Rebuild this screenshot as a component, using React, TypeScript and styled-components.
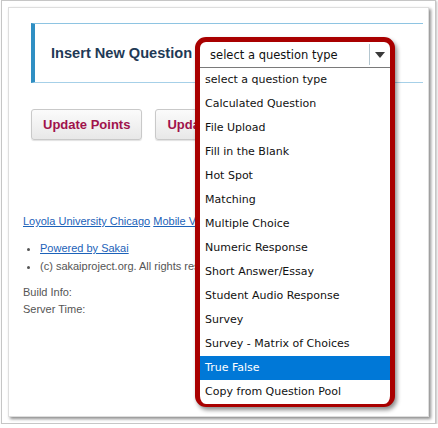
import React from "react";
import styled, { createGlobalStyle } from "styled-components";

const GlobalStyle = createGlobalStyle`
  body {
    margin: 0;
    background: #ffffff;
    font-family: "Liberation Sans", Arial, sans-serif;
  }
`;

const questionTypes = [
  "select a question type",
  "Calculated Question",
  "File Upload",
  "Fill in the Blank",
  "Hot Spot",
  "Matching",
  "Multiple Choice",
  "Numeric Response",
  "Short Answer/Essay",
  "Student Audio Response",
  "Survey",
  "Survey - Matrix of Choices",
  "True False",
  "Copy from Question Pool",
];

export default function App() {
  const selected = "True False";

  return (
    <>
      <GlobalStyle />
      <Frame>
        <Panel>
          <QuestionBox>
            <Label>Insert New Question</Label>
            <SelectAnchor>
              <DropDown>
                <SelectHead>
                  <HeadText>select a question type</HeadText>
                  <Arrow>
                    <svg width="10" height="6" viewBox="0 0 10 6">
                      <path d="M0 0 L10 0 L5 6 Z" fill="#3a3a3a" />
                    </svg>
                  </Arrow>
                </SelectHead>
                <OptionList>
                  {questionTypes.map((t) => (
                    <Option key={t} $active={t === selected}>
                      {t}
                    </Option>
                  ))}
                </OptionList>
              </DropDown>
            </SelectAnchor>
          </QuestionBox>

          <ButtonRow>
            <Button>Update Points</Button>
            <Button>Update Points</Button>
          </ButtonRow>

          <Footer>
            <LinkRow>
              <FooterLink href="#">Loyola University Chicago</FooterLink>{" "}
              <FooterLink href="#">Mobile View</FooterLink>
            </LinkRow>
            <Bullets>
              <li>
                <FooterLink href="#">Powered by Sakai</FooterLink>
              </li>
              <li>(c) sakaiproject.org. All rights reserved.</li>
            </Bullets>
            <Info>Build Info:</Info>
            <Info>Server Time:</Info>
          </Footer>
        </Panel>
      </Frame>
    </>
  );
}

const Frame = styled.div`
  box-sizing: border-box;
  margin-left: 1px;
  width: 435px;
  height: 424px;
  padding: 6px;
  border: 1px solid #c6c6c6;
  box-shadow: 1px 1px 2px rgba(0, 0, 0, 0.25);
  overflow: hidden;
`;

const Panel = styled.div`
  box-sizing: border-box;
  height: 100%;
  border: 1px solid #dedede;
  box-shadow: 2px 2px 3px rgba(0, 0, 0, 0.45);
  background: #ffffff;
`;

const QuestionBox = styled.div`
  display: flex;
  align-items: center;
  height: 60px;
  box-sizing: border-box;
  margin: 15px 5px 0 22px;
  padding-left: 16px;
  border-left: 4px solid #2f8fc3;
  border-top: 1px solid #8ec4e2;
  border-bottom: 1px solid #a6d0e8;
`;

const Label = styled.div`
  font-size: 14.6px;
  font-weight: bold;
  color: #1f3a56;
  white-space: nowrap;
`;

const SelectAnchor = styled.div`
  position: relative;
  align-self: stretch;
  margin-left: 4px;
  width: 199px;
  z-index: 10;
`;

const DropDown = styled.div`
  position: absolute;
  top: 13px;
  left: -1px;
  width: 200px;
  box-sizing: border-box;
  border: 5px solid #a90000;
  border-bottom-width: 3px;
  border-radius: 11px;
  background: #ffffff;
  box-shadow: 2px 3px 4px rgba(0, 0, 0, 0.45);
  overflow: hidden;
  font-family: "DejaVu Sans", Verdana, sans-serif;
`;

const SelectHead = styled.div`
  display: flex;
  align-items: center;
  height: 25px;
  border-bottom: 1px solid #7a7a7a;
`;

const HeadText = styled.div`
  flex: 1;
  padding-left: 10px;
  font-size: 11.5px;
  color: #111111;
  white-space: nowrap;
`;

const Arrow = styled.div`
  display: flex;
  align-items: center;
  justify-content: center;
  width: 20px;
  height: 21px;
  border-left: 1px solid #b4c6cf;
`;

const OptionList = styled.div`
  display: flex;
  flex-direction: column;
`;

const Option = styled.div<{ $active?: boolean }>`
  height: 24px;
  line-height: 24px;
  padding-left: 5px;
  font-size: 11px;
  white-space: nowrap;
  color: ${(p) => (p.$active ? "#ffffff" : "#111111")};
  background: ${(p) => (p.$active ? "#0078d7" : "transparent")};
`;

const ButtonRow = styled.div`
  display: flex;
  gap: 13px;
  margin: 26px 0 0 22px;
`;

const Button = styled.button`
  height: 31px;
  padding: 0 11px;
  border: 1px solid #c9c9c9;
  border-radius: 3px;
  background: linear-gradient(#fbfbfb, #e8e8e8);
  box-shadow: 0 1px 1px rgba(0, 0, 0, 0.12);
  font-family: "Liberation Sans", Arial, sans-serif;
  font-size: 13px;
  font-weight: bold;
  color: #a0124b;
  white-space: nowrap;
`;

const Footer = styled.div`
  margin-top: 75px;
  padding-left: 14px;
  font-size: 11px;
  color: #555555;
`;

const LinkRow = styled.div`
  line-height: 13px;
  white-space: nowrap;
`;

const FooterLink = styled.a`
  color: #1c62b9;
  text-decoration: underline;
`;

const Bullets = styled.ul`
  margin: 11px 0 9px;
  padding-left: 17px;
  line-height: 18px;
  white-space: nowrap;
`;

const Info = styled.div`
  line-height: 17px;
`;
